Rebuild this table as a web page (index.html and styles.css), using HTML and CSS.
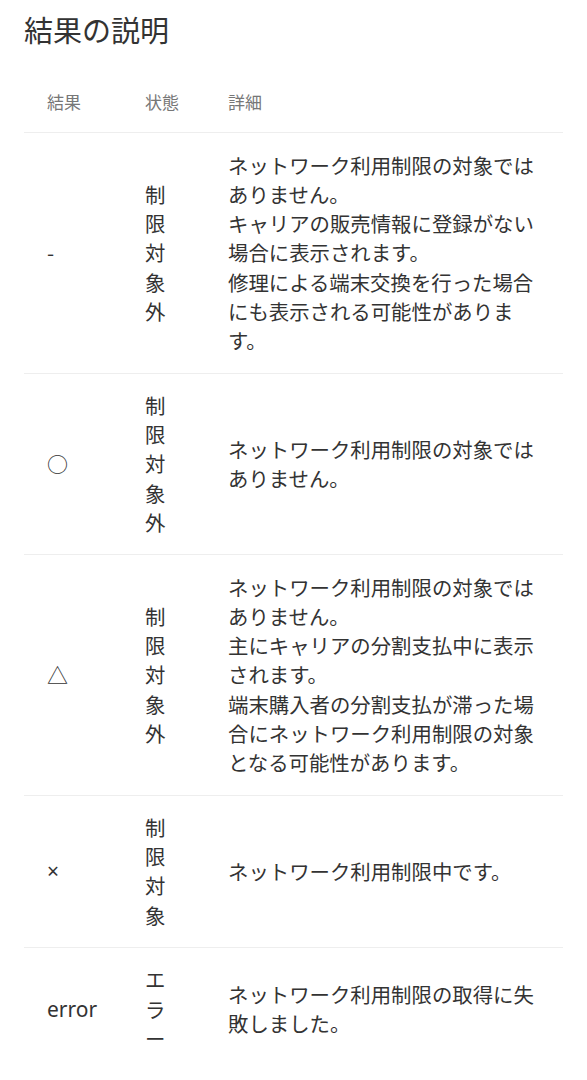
FILE: index.html
```html
<!DOCTYPE html>
<html lang="ja">
<head>
    <meta charset="UTF-8">
    <meta name="viewport" content="width=device-width, initial-scale=1.0">
    <title>結果の説明</title>
    <link rel="stylesheet" href="styles.css">
</head>
<body>

<div class="container">
    <h2 class="title">結果の説明</h2>
    <table class="result-table">
        <colgroup>
            <col class="col-result">
            <col class="col-state">
            <col>
        </colgroup>
        <thead>
            <tr>
                <th>結果</th>
                <th>状態</th>
                <th>詳細</th>
            </tr>
        </thead>
        <tbody>
            <tr>
                <td>-</td>
                <td>制限対象外</td>
                <td>ネットワーク利用制限の対象ではありません。<br>キャリアの販売情報に登録がない場合に表示されます。<br>修理による端末交換を行った場合にも表示される可能性があります。</td>
            </tr>
            <tr>
                <td class="mark">○</td>
                <td>制限対象外</td>
                <td>ネットワーク利用制限の対象ではありません。</td>
            </tr>
            <tr>
                <td class="mark">△</td>
                <td>制限対象外</td>
                <td>ネットワーク利用制限の対象ではありません。<br>主にキャリアの分割支払中に表示されます。<br>端末購入者の分割支払が滞った場合にネットワーク利用制限の対象となる可能性があります。</td>
            </tr>
            <tr>
                <td class="latin">×</td>
                <td>制限対象</td>
                <td>ネットワーク利用制限中です。</td>
            </tr>
            <tr>
                <td class="latin">error</td>
                <td>エラー</td>
                <td>ネットワーク利用制限の取得に失敗しました。</td>
            </tr>
        </tbody>
    </table>
</div>

</body>
</html>
```

FILE: styles.css
```css
body {
    margin: 0;
    padding: 0;
    background-color: #fff;
    color: #333;
    font-family: "Noto Sans CJK JP", "Noto Sans", sans-serif;
}
.container {
    padding: 0 24px;
}
.title {
    margin: 12px 0 22px;
    font-size: 29px;
    font-weight: normal;
    line-height: 35px;
    color: #333;
}
.result-table {
    width: 100%;
    border-collapse: collapse;
    table-layout: fixed;
    font-size: 20.4px;
    line-height: 29.25px;
}
.col-result {
    width: 98px;
}
.col-state {
    width: 83px;
}
.result-table th {
    text-align: left;
    font-weight: normal;
    font-size: 17px;
    color: #777;
    padding: 18px 22px 16px 23px;
}
.result-table td {
    border-top: 1px solid #eee;
    padding: 17.25px 22px 17.25px 23px;
    vertical-align: middle;
    word-break: break-all;
}
.result-table td.mark {
    font-size: 21px;
}
.result-table td.latin {
    font-family: "Noto Sans", "Liberation Sans", sans-serif;
    font-size: 21px;
}
```
